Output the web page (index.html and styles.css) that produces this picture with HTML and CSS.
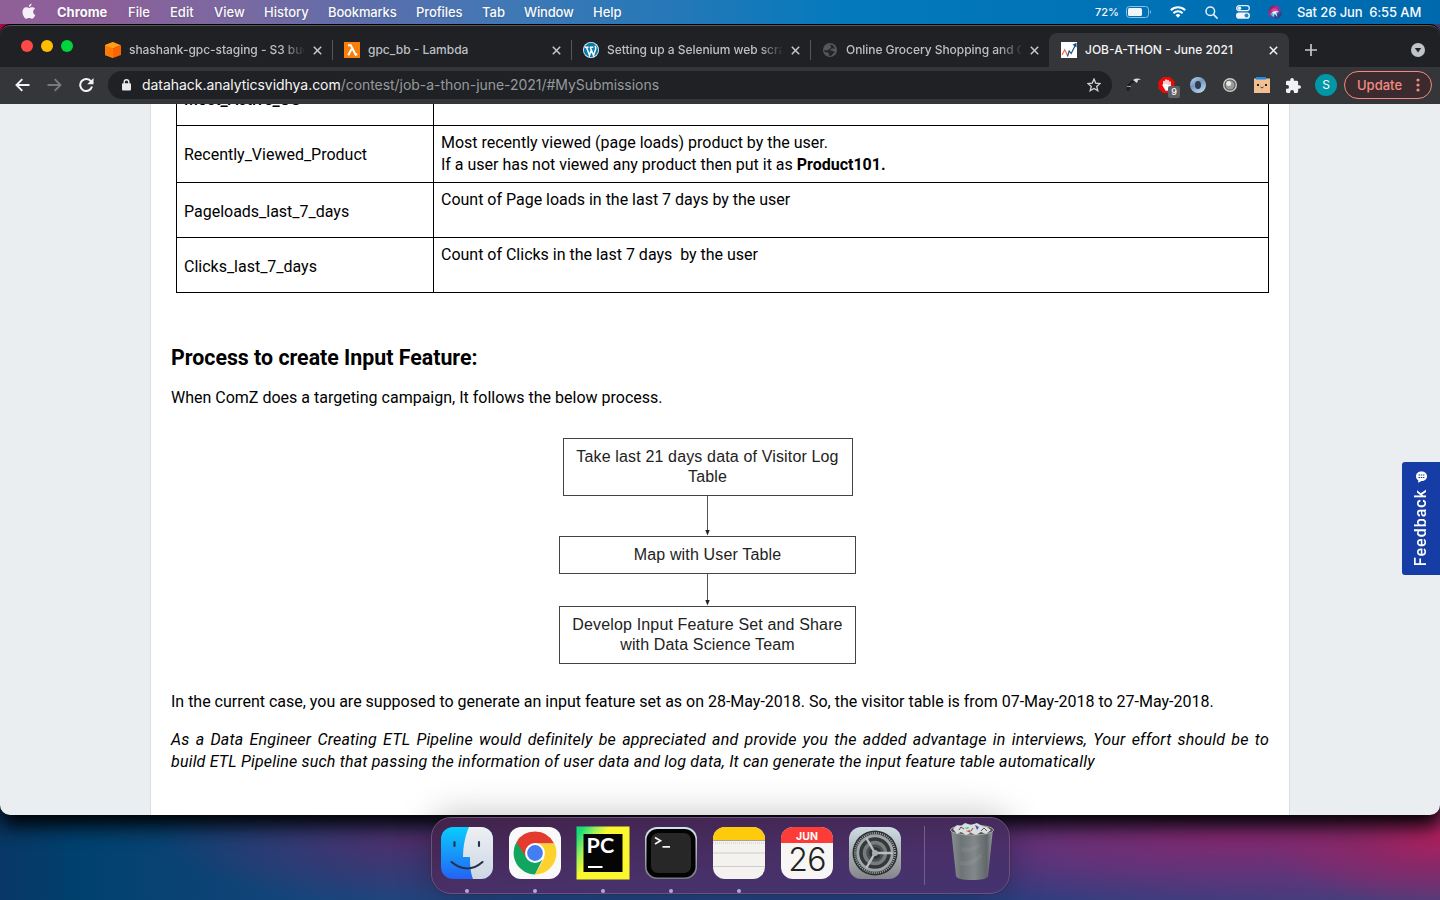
FILE: index.html
```html
<!DOCTYPE html>
<html lang="en">
<head>
<meta charset="utf-8">
<title>JOB-A-THON - June 2021</title>
<link rel="stylesheet" href="styles.css">
</head>
<body>
<div class="desktop">
  <header class="menubar">
    <svg class="apple" width="14" height="17" viewBox="0 0 14 17"><path fill="#f4f0f6" d="M9.6.6C8 .8 6.700 2.300 6.900 4 8.500 4 9.800 2.200 9.600.600zM10 4.300C8.700 4.300 8.100 5 7.200 5 6.200 5 5.400 4.300 4.100 4.300 2.300 4.300.5 5.900.5 9c0 3.200 2.200 6.800 3.900 6.800 1 0 1.500-.7 2.800-.7 1.300 0 1.600.7 2.700.7 1.500 0 2.800-2.200 3.400-3.900-2.700-1.200-2.800-4.900-.2-6.200-.8-.9-1.900-1.400-3.100-1.400z"/></svg>
    <nav class="menus">
      <span class="m m-app">Chrome</span><span class="m m-file">File</span><span class="m m-edit">Edit</span><span class="m m-view">View</span><span class="m m-hist">History</span><span class="m m-book">Bookmarks</span><span class="m m-prof">Profiles</span><span class="m m-tab">Tab</span><span class="m m-win">Window</span><span class="m m-help">Help</span>
    </nav>
    <div class="status">
      <span class="pct">72%</span>
      <svg class="s-bat" width="26" height="12" viewBox="0 0 26 12"><rect x=".5" y=".5" width="22" height="11" rx="3" fill="none" stroke="#8fbfe0"/><rect x="2" y="2" width="14" height="8" rx="1.500" fill="#eef5fb"/><path d="M24 4q2 2 0 4z" fill="#8fbfe0"/></svg>
      <svg class="s-wifi" width="16" height="12" viewBox="0 0 16 12"><g fill="none" stroke="#fff" stroke-width="2"><path d="M.8 4.300a10.300 10.300 0 0 1 14.400 0"/><path d="M3.400 7.200a6.500 6.500 0 0 1 9.200 0"/></g><path fill="#fff" d="M8 11.700 5.600 9.300a3.400 3.400 0 0 1 4.800 0z"/></svg>
      <svg class="s-find" width="13" height="13" viewBox="0 0 13 13"><g fill="none" stroke="#e8f2fa" stroke-width="1.500" stroke-linecap="round"><circle cx="5.300" cy="5.300" r="4.300"/><path d="m8.600 8.600 3.500 3.500"/></g></svg>
      <svg class="s-cc" width="14" height="14" viewBox="0 0 14 14"><rect x=".7" y=".7" width="12.600" height="5" rx="2.500" fill="none" stroke="#e8f2fa" stroke-width="1.300"/><circle cx="3.500" cy="3.200" r="1.800" fill="#e8f2fa"/><rect y="7.500" width="14" height="6.300" rx="3.100" fill="#f0f6fb"/><circle cx="10.500" cy="10.600" r="2" fill="#3a7fb8"/></svg>
      <svg class="s-siri" width="14" height="14" viewBox="0 0 14 14"><defs><linearGradient id="siri" x2="1" y2="1"><stop stop-color="#282846"/><stop offset=".35" stop-color="#b32b8c"/><stop offset=".65" stop-color="#3c50a8"/><stop offset="1" stop-color="#152b3c"/></linearGradient></defs><circle cx="7" cy="7" r="6.800" fill="url(#siri)"/><path d="M2.500 5.500Q7 1 11 6L8 6.500z" fill="#ef3b9c"/><path d="M7 6.500 2.500 9Q4 12 6 12z" fill="#28c7d8"/><path d="M3 8.500Q6 4.500 11.500 7L8.300 7.500 9.500 12 6.700 8.500 4.500 11.500 5.600 8z" fill="#fff" opacity=".9"/></svg>
      <span class="clock">Sat 26 Jun&nbsp; 6:55 AM</span>
    </div>
  </header>

  <main class="window">
    <div class="tabstrip">
      <div class="lights"><i class="red"></i><i class="yellow"></i><i class="green"></i></div>
      <div class="tab tab-s3">
        <svg width="16" height="16" viewBox="0 0 16 16"><path fill="#ff9a0a" d="M8 0 0 3v10l8 3z"/><path fill="#ff9d16" d="m8 0 8 3.200L8 6.500 0 3.200z"/><path fill="#fa6400" d="m8 6.500 8-3.300V13l-8 3z"/><path fill="#ff7a05" d="M0 3.200 8 6.500V16l-8-3z"/></svg>
        <span class="title fade">shashank-gpc-staging - S3 buc</span>
        <svg class="x" width="9" height="9" viewBox="0 0 9 9"><path d="m.8.800 7.400 7.400m0-7.400L.8 8.200"/></svg>
      </div>
      <div class="tab tab-lambda">
        <svg width="16" height="16" viewBox="0 0 16 16"><rect width="16" height="16" fill="#fa7e0a"/><path fill="none" stroke="#fff" stroke-width="2" d="M4 3.200h2.800l4.800 9.500 1.600-.700M7.600 7 4.200 13.300"/></svg>
        <span class="title">gpc_bb - Lambda</span>
        <svg class="x" width="9" height="9" viewBox="0 0 9 9"><path d="m.8.800 7.400 7.400m0-7.400L.8 8.200"/></svg>
      </div>
      <div class="tab tab-wp">
        <svg width="16" height="16" viewBox="0 0 16 16"><circle cx="8" cy="8" r="8" fill="#e6f4fa"/><circle cx="8" cy="8" r="7.200" fill="#087daf"/><path d="M1.800 5.200h3.700M6.800 5.200h3.500M3.500 5.300l3 8 1.900-5.500M7.200 5.300l3.300 8 2.100-6.100q.6-2-.8-3.400" fill="none" stroke="#fff" stroke-width="1.500"/></svg>
        <span class="title fade">Setting up a Selenium web scra</span>
        <svg class="x" width="9" height="9" viewBox="0 0 9 9"><path d="m.8.800 7.400 7.400m0-7.400L.8 8.200"/></svg>
      </div>
      <div class="tab tab-grocery">
        <svg width="14" height="14" viewBox="0 0 14 14"><circle cx="7" cy="7" r="7" fill="#55575a"/><path fill="#242528" d="M7 1.500q-1 1 1 1.500.5 2.500-2 3L4.500 7.500 1.200 7Q1 9 3 9.500l2-.200 1 1.700-.500 1.500 3 .300 1.500-2.300 2-1q-2-2-3.500-2L6.500 7.200 9 5.500h3L10 2.500z"/></svg>
        <span class="title fade">Online Grocery Shopping and O</span>
        <svg class="x" width="9" height="9" viewBox="0 0 9 9"><path d="m.8.800 7.400 7.400m0-7.400L.8 8.200"/></svg>
      </div>
      <div class="tab tab-active">
        <svg width="16" height="16" viewBox="0 0 16 16"><rect width="16" height="16" fill="#fff"/><path d="m1 13 2.700-5.200 3 6.200" fill="none" stroke="#f06a45" stroke-width="1.200"/><path d="m6.500 14.500 1.700-5.500 2 2.500 4-8" fill="none" stroke="#1b4f82" stroke-width="1.200"/><path fill="#1b4f82" d="m11.500 2.800 4-2v4.600z"/></svg>
        <span class="title">JOB-A-THON - June 2021</span>
        <svg class="x" width="9" height="9" viewBox="0 0 9 9"><path d="m.8.800 7.400 7.400m0-7.400L.8 8.200"/></svg>
      </div>
      <svg class="plus" width="12" height="12" viewBox="0 0 12 12"><path d="M6 0v12M0 6h12" stroke="#c4c7ca" stroke-width="1.700"/></svg>
      <svg class="tabsearch" width="14" height="14" viewBox="0 0 14 14"><circle cx="7" cy="7" r="7" fill="#c1c4c8"/><path d="M3.800 5h6.400L7 9.500z" fill="#222326"/></svg>
    </div>

    <div class="toolbar">
      <svg class="t-back" width="15" height="14" viewBox="0 0 15 14"><path d="M14.500 7H1.600M7.300 1.200 1.500 7l5.800 5.800" fill="none" stroke="#f1f3f4" stroke-width="1.900"/></svg>
      <svg class="t-fwd" width="15" height="14" viewBox="0 0 15 14"><path d="M.5 7h12.900M7.700 1.200 13.500 7l-5.800 5.800" fill="none" stroke="#77797c" stroke-width="1.900"/></svg>
      <svg class="t-reload" width="15" height="14" viewBox="0 0 15 14"><path d="M12.100 3.500A6 6 0 1 0 13 8.600" fill="none" stroke="#f1f3f4" stroke-width="2"/><path d="M14.500 0v6.300H8.200z" fill="#f1f3f4"/></svg>
      <div class="omnibox">
        <svg width="9" height="12" viewBox="0 0 9 12"><rect y="4.300" width="9" height="7.200" rx="1" fill="#e8eaed"/><path d="M2.200 4.800V3a2.300 2.300 0 0 1 4.600 0v1.800" fill="none" stroke="#e8eaed" stroke-width="1.400"/></svg>
        <span class="url"><b>datahack.analyticsvidhya.com</b>/contest/job-a-thon-june-2021/#MySubmissions</span>
        <svg class="star" width="14" height="14" viewBox="0 0 14 14"><path d="m7 1 1.700 4.100 4.400.400-3.400 2.900 1.100 4.300L7 10.400l-3.800 2.300 1.100-4.300L.9 5.500l4.400-.400z" fill="none" stroke="#d0d3d6" stroke-width="1.300"/></svg>
      </div>
      <div class="exts">
        <svg width="16" height="16" viewBox="0 0 16 16"><path d="M1 14Q-1 8 7 3l3 1-5 3q-2 3-1 6z" fill="#1c1c1d"/><path d="M7 3q4-2.500 8-.5l-3 .500-1 3z" fill="#dedede"/><path d="M1 9.500h4" stroke="#999"/><path d="M4 13.500h7" stroke="#4b2d2d"/></svg>
        <span class="adblock"><svg width="17" height="16" viewBox="0 0 17 16"><path fill="#f00707" d="M5 0h7l4.500 4.500v7L12 16H5L.5 11.500v-7z"/><path d="M6 8V4.500M8 8V3M10 8V3.500M12 9V5M5.500 8.500 8 13h2l2-4z" stroke="#fff" stroke-width="1.600" stroke-linecap="round" fill="#fff"/></svg><i>9</i></span>
        <svg width="16" height="16" viewBox="0 0 16 16"><defs><linearGradient id="ring" x2=".6" y2="1"><stop stop-color="#c5d9ee"/><stop offset=".5" stop-color="#7199c3"/><stop offset="1" stop-color="#b9d0e8"/></linearGradient></defs><circle cx="8" cy="8" r="8" fill="url(#ring)"/><ellipse cx="8" cy="8" rx="3" ry="4" fill="#303a4a"/></svg>
        <svg width="16" height="16" viewBox="0 0 16 16"><circle cx="8" cy="8" r="7" fill="#c9cbc9"/><circle cx="8" cy="8" r="5.600" fill="#545654"/><circle cx="8" cy="8" r="4.500" fill="#9a9c9a"/><circle cx="6.700" cy="6.500" r="2.500" fill="#e7e9e7"/></svg>
        <svg width="16" height="16" viewBox="0 0 16 16"><rect y="1.500" width="16" height="14.500" fill="#f2bf91"/><path d="M2 0h10v2.500H2z" fill="#168bf0"/><g fill="#222"><rect x="3" y="7" width="2" height="2"/><rect x="11" y="7" width="2" height="2"/></g><path d="m6.500 10 1.500 1 1.500-1" stroke="#444" fill="none"/></svg>
        <svg width="15" height="15" viewBox="2 1 21 21"><path fill="#f1f3f4" d="M20.500 11H19V7a2 2 0 0 0-2-2h-4V3.500a2.500 2.500 0 0 0-5 0V5H4a2 2 0 0 0-2 2v3.800h1.500a2.700 2.700 0 0 1 0 5.400H2V20c0 1.100.9 2 2 2h3.800v-1.500a2.700 2.700 0 0 1 5.400 0V22H17a2 2 0 0 0 2-2v-4h1.500a2.500 2.500 0 0 0 0-5z"/></svg>
      </div>
      <span class="avatar">S</span>
      <span class="update">Update<svg width="4" height="14" viewBox="0 0 4 14"><g fill="#f38b82"><circle cx="2" cy="2" r="1.600"/><circle cx="2" cy="7" r="1.600"/><circle cx="2" cy="12" r="1.600"/></g></svg></span>
    </div>

    <div class="page">
      <article class="content">
        <table class="features">
          <tr class="cut"><td class="name">Most_Active_OS</td><td></td></tr>
          <tr class="tall"><td class="name">Recently_Viewed_Product</td><td>Most recently viewed (page loads) product by the user.<br>If a user has not viewed any product then put it as <b>Product101.</b></td></tr>
          <tr><td class="name">Pageloads_last_7_days</td><td>Count of Page loads in the last 7 days by the user</td></tr>
          <tr><td class="name">Clicks_last_7_days</td><td>Count of Clicks in the last 7 days&nbsp; by the user</td></tr>
        </table>
        <h3>Process to create Input Feature:</h3>
        <p class="intro">When ComZ does a targeting campaign, It follows the below process.</p>
        <div class="flow">
          <div class="box first">Take last 21 days data of Visitor Log<br>Table</div>
          <svg width="7" height="40" viewBox="0 0 7 40"><path d="M3.500 0v36" stroke="#555"/><path d="M1.300 34h4.400l-2.200 5.500z" fill="#222"/></svg>
          <div class="box mid">Map with User Table</div>
          <svg width="7" height="32" viewBox="0 0 7 32"><path d="M3.500 0v28" stroke="#555"/><path d="M1.300 26h4.400l-2.200 5.500z" fill="#222"/></svg>
          <div class="box last">Develop Input Feature Set and Share<br>with Data Science Team</div>
        </div>
        <p class="case">In the current case, you are supposed to generate an input feature set as on 28-May-2018. So, the visitor table is from 07-May-2018 to 27-May-2018.</p>
        <p class="note">As a Data Engineer Creating ETL Pipeline would definitely be appreciated and provide you the added advantage in interviews, Your effort should be to build&nbsp;ETL Pipeline such that passing the information of user data and log data, It can generate the input feature table automatically</p>
      </article>
      <div class="feedback"><span>Feedback</span><svg width="13" height="12" viewBox="0 0 12 12"><path fill="#fff" d="M6 .5c3.200 0 5.500 2 5.500 4.700S9.200 10 6 10l-3.500 1.700.300-2.500C1.300 8.400.5 7 .5 5.200.5 2.500 2.800.5 6 .5z"/><path d="M3 4h6M3 6.500h6" stroke="#163ca5" stroke-dasharray="1.500 .700"/></svg></div>
    </div>
  </main>

  <footer class="dockarea">
    <div class="dock">
      <div class="app running">
        <svg viewBox="0 0 52 52"><defs><linearGradient id="fb" x2="0" y2="1"><stop stop-color="#08cdfd"/><stop offset="1" stop-color="#2463f5"/></linearGradient><linearGradient id="fw" x2="0" y2="1"><stop stop-color="#edf0f4"/><stop offset="1" stop-color="#ccd6e3"/></linearGradient><clipPath id="fr"><rect width="52" height="52" rx="12"/></clipPath></defs><g clip-path="url(#fr)"><path fill="url(#fb)" d="M0 0h52v52H0z"/><path fill="url(#fw)" d="M28 0C24 9 22 20 22 30h7c0 9 .500 15 3 22h20V0z"/></g><path d="M13.500 15v4M38 15v4M10.500 35q16 13 31 0" stroke="#25304a" stroke-width="2.100" stroke-linecap="round" fill="none"/></svg>
      </div>
      <div class="app running">
        <svg viewBox="0 0 52 52"><rect width="52" height="52" rx="12" fill="#f9f9f9"/><path fill="#10a660" d="M26 26 7.500 15.300A21.400 21.400 0 0 0 26 47.400l7.500-15z"/><path fill="#e33b2e" d="M26 16.500h19.200Q39 4.600 26 4.600T7.500 15.300l9.500 15z"/><path fill="#fdd12e" d="M26 16.500h19.200A21.400 21.400 0 0 1 26 47.400l9-16z"/><circle cx="26" cy="26" r="10" fill="#fff"/><circle cx="26" cy="26" r="7.900" fill="#437ff2"/></svg>
      </div>
      <div class="app running">
        <svg viewBox="0 0 52 52" overflow="visible"><defs><linearGradient id="pc" x2=".45" y2=".28"><stop offset=".2" stop-color="#17dd79"/><stop offset=".65" stop-color="#a1f257"/><stop offset="1" stop-color="#faf72d"/></linearGradient></defs><rect x="-.5" y="-.5" width="53" height="53" fill="url(#pc)"/><rect x="6.500" y="7" width="39" height="38" fill="#050505"/><text class="pctext" x="9.500" y="26">PC</text><path fill="#fff" d="M11 39h14.500v2H11z"/></svg>
      </div>
      <div class="app running">
        <svg viewBox="0 0 52 52"><defs><linearGradient id="tm" x2="0" y2="1"><stop stop-color="#cfe5ef"/><stop offset="1" stop-color="#77797d"/></linearGradient></defs><rect width="52" height="52" rx="12" fill="url(#tm)"/><rect x="1.500" y="2" width="49" height="48.500" rx="11" fill="#030303"/><rect x="6" y="6" width="40" height="40" rx="7" fill="#272728"/><path d="m10 10.500 5.500 3.200-5.500 3.200M17.500 19.800h7.500" fill="none" stroke="#f6f6f6" stroke-width="1.700"/></svg>
      </div>
      <div class="app running">
        <svg viewBox="0 0 52 52"><defs><clipPath id="nr"><rect width="52" height="52" rx="12"/></clipPath></defs><g clip-path="url(#nr)"><path fill="#f4f2ef" d="M0 0h52v52H0z"/><path fill="#fdca0c" d="M0 0h52v13H0z"/><path d="M0 13.500h52" stroke="#aaa293"/><path d="M0 16h52" stroke="#c9c7c4" stroke-dasharray="1 1"/><path d="M0 26h52M0 39.500h52" stroke="#d0cdc9"/></g></svg>
      </div>
      <div class="app">
        <svg viewBox="0 0 52 52"><defs><clipPath id="cr"><rect width="52" height="52" rx="12"/></clipPath></defs><g clip-path="url(#cr)"><path fill="#f7f6f5" d="M0 0h52v52H0z"/><path fill="#fb3c38" d="M0 0h52v16H0z"/></g><text class="caljun" x="26" y="12.500">JUN</text><text class="calday" x="26" y="43.500">26</text></svg>
      </div>
      <div class="app">
        <svg viewBox="0 0 52 52"><defs><linearGradient id="sp" x2="0" y2="1"><stop stop-color="#cfdce4"/><stop offset="1" stop-color="#858589"/></linearGradient></defs><rect width="52" height="52" rx="12" fill="url(#sp)"/><circle cx="26" cy="26" r="22.500" fill="#2c3033"/><circle cx="26" cy="26" r="20" fill="none" stroke="#a3a8ab" stroke-width="2" stroke-dasharray="1 1.100"/><circle cx="26" cy="26" r="17.300" fill="#33383b" stroke="#a0a5a8" stroke-width="3"/><circle cx="26" cy="26" r="10.500" fill="#4a4f52" stroke="#777c7f" stroke-width="3.500"/><circle cx="26" cy="26" r="6" fill="#2f3437"/><path d="M26 26h17.500M26 26l-8.700-15M26 26l-8.700 15" stroke="#b9bec1" stroke-width="2.400"/><circle cx="26" cy="26" r="3" fill="#a9aeb1"/></svg>
      </div>
      <span class="divider"></span>
      <div class="trash">
        <svg width="46" height="60" viewBox="0 0 46 60"><defs><linearGradient id="tr"><stop stop-color="#8a9091"/><stop offset=".25" stop-color="#6d7475"/><stop offset=".55" stop-color="#83898b"/><stop offset=".85" stop-color="#616768"/><stop offset="1" stop-color="#979da0"/></linearGradient></defs><path d="M2 7Q23 0 44 7L39 54q-1 4-16 4T7 54z" fill="url(#tr)"/><ellipse cx="23" cy="8" rx="21.500" ry="5" fill="#4c4d50" stroke="#a5a9aa"/><path d="m4 7 4-4 4 1 4-3 6 2 6-2 5 3 5 1 4 3-5 4-5-2-5 3-5-2-5 2-5-3-4 2z" fill="#dedddd"/><path d="m10 8 2-3 3 2M32 9l3-3 3 3M22 9l2-3" stroke="#55555c" fill="none" stroke-width="1"/><path d="m15 6 5-1-1 2z" fill="#28c898"/><path d="m26 3 4 2-2 3z" fill="#4554be"/><path d="m17 9 4-1 1 3z" fill="#b65d37"/><path d="M12 27q10 3 18-4M11 41q12 3 21-8" stroke="#a5aaac" opacity=".18" fill="none" stroke-width="4"/></svg>
      </div>
    </div>
  </footer>
</div>
</body>
</html>
```

FILE: styles.css
```css
* { box-sizing: border-box; }
body { margin: 0; }
svg { display: block; flex: none; }

.desktop {
  width: 1440px;
  height: 900px;
  overflow: hidden;
  display: flex;
  flex-direction: column;
  font-family: Inter, "Liberation Sans", sans-serif;
  background:
    radial-gradient(ellipse 180px 75px at 1440px 834px, #b0205d 0, rgba(150, 36, 98, .7) 45%, transparent 100%),
    radial-gradient(ellipse 500px 75px at 1240px 836px, #84286f 0, rgba(110, 48, 120, .75) 50%, transparent 100%),
    radial-gradient(ellipse 260px 65px at 420px 840px, #502f6c 0, transparent 100%),
    radial-gradient(circle 12px at 0 26px, #b50b4d 0, #b50b4d 100%, transparent 100%),
    linear-gradient(90deg, #083765 0, #00416f 80px, #1e467f 400px, #283f80 1000px, #47407c 1440px);
}

/* menu bar */
.menubar {
  position: relative;
  z-index: 1;
  height: 24px;
  flex: none;
  display: flex;
  align-items: center;
  padding: 0 19px 0 22px;
  color: #fafafd;
  font-size: 13px;
  font-weight: 500;
  background: linear-gradient(90deg, #905f98 0, #8b6099 110px, #7a69a1 240px, #596fac 380px, #3f78b5 510px, #2478b8 680px, #047abc 840px, #0073b7 1100px, #0069ad 1440px);
}
.apple { margin-bottom: 1px; }
.menus { display: flex; gap: 20px; margin-left: 21px; }
.m { white-space: nowrap; text-shadow: 0 1px 2px rgba(0, 0, 0, .2); }
.m-app { width: 51px; font-weight: 700; }
.m-file { width: 22px; }
.m-edit { width: 24px; }
.m-view { width: 30px; }
.m-hist { width: 44px; }
.m-book { width: 68px; letter-spacing: -.15px; }
.m-prof { width: 46px; letter-spacing: -.1px; }
.m-tab { width: 22px; }
.m-win { width: 49px; letter-spacing: -.15px; }
.m-help { width: 28px; }
.status { margin-left: auto; display: flex; align-items: center; }
.pct { font-size: 11px; margin-right: 7px; }
.s-wifi { margin: 0 19px 0 18px; }
.s-cc { margin: 0 18px 0 18px; }
.clock { margin-left: 15px; width: 124px; white-space: nowrap; letter-spacing: -.1px; }

/* browser window */
.window {
  height: 791px;
  flex: none;
  display: flex;
  flex-direction: column;
  border-radius: 10px;
  overflow: hidden;
  background: #202124;
  border-top: 1px solid #000;
  box-shadow: 0 10px 20px 1px #000;
}
.tabstrip {
  height: 42px;
  flex: none;
  display: flex;
  align-items: center;
  padding: 7px 15px 0 21px;
  border-top: 1px solid #55575a;
  border-radius: 10px 10px 0 0;
}
.lights { display: flex; gap: 8px; width: 73px; align-self: flex-start; margin-top: 7px; }
.lights i { width: 12px; height: 12px; border-radius: 50%; }
.red { background: #ff4a45; }
.yellow { background: #ffbd00; }
.green { background: #00d53e; }
.tab {
  height: 20px;
  display: flex;
  align-items: center;
  border-right: 1px solid #55575b;
  color: #bcc0c4;
  font-size: 12px;
  font-weight: 500;
}
.title { flex: 1; min-width: 0; overflow: hidden; white-space: nowrap; line-height: 18px; }
.fade { letter-spacing: -.05px; mask-image: linear-gradient(90deg, #000 87%, rgba(0, 0, 0, .1)); }
.x { fill: none; stroke: #c6c9cc; stroke-width: 1.5; margin-left: 9px; }
.tab-s3 { width: 239px; padding: 0 10px 0 11px; }
.tab-s3 .title { margin-left: 8px; }
.tab-lambda { width: 239px; padding: 0 10px 0 11px; }
.tab-lambda .title { margin-left: 8px; }
.tab-wp { width: 239px; padding: 0 10px 0 11px; }
.tab-wp .title { margin-left: 8px; }
.tab-grocery { width: 238px; padding: 0 10px 0 12px; border-right: 0; }
.tab-grocery .title { margin-left: 9px; }
.tab-active {
  width: 240px;
  height: 34px;
  padding: 0 11px 0 12px;
  border-right: 0;
  border-radius: 8px 8px 0 0;
  background: #35363a;
  color: #f2f3f4;
}
.tab-active .title { margin-left: 8px; }
.tab-active .x { stroke: #f2f3f4; }
.plus { margin-left: 16px; }
.tabsearch { margin-left: auto; }

.toolbar {
  height: 37px;
  flex: none;
  display: flex;
  align-items: center;
  padding: 0 8px 1px 15px;
  background: #35363a;
}
.t-fwd { margin-left: 17px; }
.t-reload { margin-left: 17px; }
.omnibox {
  width: 1004px;
  height: 28px;
  margin-left: 14px;
  border-radius: 14px;
  background: #202124;
  display: flex;
  align-items: center;
  padding: 0 11px 0 14px;
}
.url { flex: 1; margin: 0 0 1px 11px; white-space: nowrap; font-size: 14px; color: #969a9e; letter-spacing: -.045px; }
.url b { font-weight: 400; color: #f5f6f7; }
.exts { display: flex; align-items: center; gap: 16px; margin-left: 14px; }
.adblock { position: relative; width: 16px; }
.adblock i {
  position: absolute;
  left: 10px;
  top: 9px;
  width: 12px;
  height: 12px;
  border-radius: 2px;
  background: #5f6063;
  color: #fff;
  font: 500 9px/12px Inter, sans-serif;
  text-align: center;
}
.avatar {
  width: 22px;
  height: 22px;
  margin-left: 14px;
  border-radius: 50%;
  background: #0097a7;
  color: #fff;
  font-size: 12px;
  line-height: 22px;
  text-align: center;
}
.update {
  width: 88px;
  height: 28px;
  margin-left: 7px;
  border: 1px solid #f38b82;
  border-radius: 14px;
  background: #3c2b2e;
  color: #f38b82;
  font-size: 13px;
  font-weight: 500;
  display: flex;
  align-items: center;
  justify-content: space-between;
  padding: 0 11px 0 12px;
}

/* contest page */
.page {
  position: relative;
  flex: 1;
  min-height: 0;
  overflow: hidden;
  background: #eaeef1;
}
.content {
  width: 1140px;
  height: 711px;
  margin: 0 auto;
  padding: 0 20px;
  overflow: hidden;
  background: #fff;
  border: solid #dcdfe1;
  border-width: 0 1px;
  font: 16px/22px Roboto, sans-serif;
  color: #000;
}
.features {
  width: 1093px;
  margin: -34px 0 0 5px;
  border-collapse: collapse;
  table-layout: fixed;
}
.features td { border: 1px solid #000; height: 55px; padding: 6px 7px 0; vertical-align: top; letter-spacing: -.01px; }
.features .tall td { height: 57px; }
.features .name { width: 257px; vertical-align: middle; padding-top: 4px; }
.features .tall .name { padding-top: 2px; }
.features .cut .name { font-weight: 500; padding-top: 3px; }
h3 { margin: 53px 0 0; font: 700 21.33px/24px Roboto, sans-serif; }
p { margin: 0; }
.intro { margin-top: 17px; }
.flow {
  width: 297px;
  margin: 29px 0 0 388px;
  display: flex;
  flex-direction: column;
  align-items: center;
  font: 16px/20px "Liberation Sans", sans-serif;
  letter-spacing: .15px;
  color: #222;
}
.box { width: 297px; border: 1px solid #444; text-align: center; white-space: nowrap; display: grid; place-content: center; }
.first { width: 290px; height: 58px; }
.mid { height: 38px; }
.last { height: 58px; }
.case { margin-top: 27px; white-space: nowrap; letter-spacing: -.008px; }
.note { margin-top: 16px; font-style: italic; text-align: justify; letter-spacing: .195px; }

.feedback {
  position: absolute;
  right: 0;
  top: 358px;
  width: 38px;
  height: 113px;
  border-radius: 3px 0 0 3px;
  background: #163ca5;
  color: #fff;
  font: 500 16px/38px Roboto, sans-serif;
  letter-spacing: 1px;
  display: flex;
  flex-direction: column-reverse;
  align-items: center;
  justify-content: space-between;
  padding: 9px 0 9px;
}
.feedback span { writing-mode: vertical-rl; transform: rotate(180deg); }

/* dock */
.dockarea { height: 85px; flex: none; display: flex; justify-content: center; padding-top: 2px; position: relative; }
.dock {
  width: 579px;
  height: 77px;
  border: 1px solid #6d5179;
  border-radius: 20px;
  padding: 9px 12px 0 9px;
  display: flex;
  gap: 16px;
  background: linear-gradient(175deg, rgba(68, 35, 75, .97), rgba(73, 48, 105, .97) 65%, rgba(67, 51, 112, .97));
  box-shadow: 0 0 1px #111, 0 0 36px rgba(0, 0, 0, .28);
}
.app { width: 52px; height: 66px; flex: none; display: flex; flex-direction: column; align-items: center; justify-content: space-between; }
.app svg { width: 52px; height: 52px; }
.running::after { content: ""; width: 4px; height: 4px; border-radius: 50%; background: #b4a7e5; }
.divider { width: 1px; height: 59px; margin: -1px 0 0 7px; background: #765c8f; }
.trash { margin: -5px 0 0 8px; }
.pctext { font: 700 21.5px Lato, sans-serif; fill: #fff; letter-spacing: .3px; }
.caljun { font: 700 10.5px Inter, sans-serif; fill: #fff; text-anchor: middle; }
.calday { font: 300 32px Inter, sans-serif; fill: #222; text-anchor: middle; letter-spacing: -.8px; }
```
